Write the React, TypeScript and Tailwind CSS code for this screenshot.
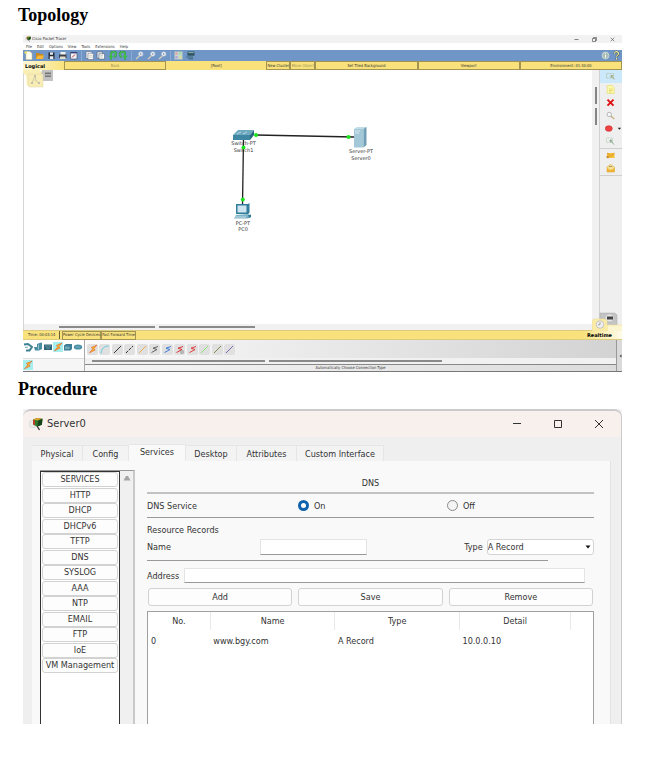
import React, { useState } from "react";

const TINY = "font-['DejaVu_Sans_Condensed','Noto_Sans',sans-serif] text-[4px] leading-[6px]";

/* ---------- Packet Tracer: toolbar glyphs ---------- */

function Glyph({ children, size = 11, box = 11 }: { children: React.ReactNode; size?: number; box?: number }) {
  return (
    <svg width={size} height={size} viewBox={`0 0 ${box} ${box}`} fill="none" aria-hidden="true">
      {children}
    </svg>
  );
}

const NewFile = (
  <Glyph>
    <path d="M3 1.5h4l2 2v6H3z" fill="#fffef0" stroke="#c9c68a" strokeWidth=".5" />
    <path d="M1.5 1.5h2.5v2H1.5z" fill="#f5e65c" />
  </Glyph>
);
const OpenFile = (
  <Glyph>
    <path d="M2 3h3l1 1h3v5H2z" fill="#c88a1e" />
    <path d="M3.5 5.5H10L8.8 9H2z" fill="#f6b637" />
  </Glyph>
);
const SaveFile = (
  <Glyph>
    <path d="M2.5 2.5h6v6.5h-6z" fill="#252a33" />
    <path d="M4 2.5h3v2.3H4zM3.8 6.3h3.5V9H3.8z" fill="#e8edf3" />
  </Glyph>
);
const Printer = (
  <Glyph>
    <path d="M3.5 2h5v3h-5z" fill="#f3f3ec" />
    <path d="M2 4.5h7.5V8H2z" fill="#3c4048" />
    <path d="M3 6.5h5.5V9H3z" fill="#e0dfce" />
  </Glyph>
);
const Wizard = (
  <Glyph>
    <path d="M2.5 2.5h6.5v6.5H2.5z" fill="#f2f2f4" stroke="#40455a" strokeWidth=".6" />
    <path d="M2.5 2.7H9" stroke="#303a78" strokeWidth="1.3" />
    <path d="M4 7.5 7 4.5" stroke="#b63a4a" />
  </Glyph>
);
const Copy = (
  <Glyph>
    <path d="M2 1.5h5l1 1v6H2z" fill="#e9ecef" stroke="#5a6270" strokeWidth=".5" />
    <path d="M4 3.3h4.300l1 1V9.500H4z" fill="#faf9f4" stroke="#5a6270" strokeWidth=".5" />
    <path d="M5.200 5.600h2.600M5.200 7.200h2.600" stroke="#a0a5b0" strokeWidth=".5" />
  </Glyph>
);
const Paste = (
  <Glyph>
    <path d="M2 1.700h5.500v6.500H2z" fill="#d8dde3" stroke="#4d5564" strokeWidth=".5" />
    <path d="M4 3.800h5.500V9H4z" fill="#fdfdf9" stroke="#4d5564" strokeWidth=".5" />
    <path d="M5 5.600h3M5 7h3" stroke="#a0a5b0" strokeWidth=".5" />
  </Glyph>
);
const Undo = (
  <Glyph>
    <path d="M4 9.500V4.300C4 1 9 1 9 4.300c0 1.500-.8 2.400-2.200 2.700" stroke="#1f8f36" strokeWidth="2" />
    <path d="M4 9V4.300C4 1 9 1 9 4.300c0 1.500-.8 2.400-2.200 2.700" stroke="#6fe066" strokeWidth="1" />
    <path d="M1.300 5.800h5L3.900 9.300z" fill="#38bb4a" />
  </Glyph>
);
const Redo = (
  <Glyph>
    <path d="M7 9.500V4.300C7 1 2 1 2 4.300c0 1.500.8 2.400 2.200 2.700" stroke="#1f8f36" strokeWidth="2" />
    <path d="M7 9V4.300C7 1 2 1 2 4.300c0 1.500.8 2.400 2.200 2.700" stroke="#6fe066" strokeWidth="1" />
    <path d="M9.700 5.800h-5l2.400 3.500z" fill="#38bb4a" />
  </Glyph>
);
const Zoom = (
  <Glyph>
    <path d="M5.4 5.8 2 9.2" stroke="#e3d3b4" strokeWidth="1.2" />
    <circle cx="6.8" cy="4" r="2.3" fill="#e8eff6" stroke="#b4bfcc" strokeWidth=".6" />
    <circle cx="6.8" cy="4" r=".7" fill="#6c7789" />
  </Glyph>
);
const Palette = (
  <Glyph>
    <path d="M1.5 1.5h8v8h-8z" fill="#c3d8d3" stroke="#9ab1b5" strokeWidth=".5" />
    <path d="M2.3 2.3h2.4v2.4H2.3z" fill="#e6a3a3" />
    <path d="M6 2.3h2.6v2.4H6z" fill="#a9dba4" />
    <path d="M2.3 6h2.4v2.6H2.3z" fill="#b6a6dc" />
    <path d="M6 6h2.6v2.6H6z" fill="#d5dc9a" />
  </Glyph>
);
const CustomDevice = (
  <Glyph>
    <path d="M2.500 1.500h7v4.200h-7z" fill="#2f5560" />
    <path d="M3.300 2.600h5.500" stroke="#a8c7ca" strokeWidth=".8" />
    <path d="M1.500 6.500H8v1H1.500zM3.500 8.200H8v1H3.500z" fill="#3c6570" />
  </Glyph>
);
const Info = (
  <Glyph>
    <circle cx="5.5" cy="5.5" r="3.400" fill="#a9bdbb" stroke="#d8e4d8" strokeWidth=".7" />
    <path d="M5.500 5v2.600M5.500 3.200v.9" stroke="#fdfdee" />
  </Glyph>
);
const Help = (
  <Glyph>
    <path d="M3.500 3.800c0-3 4.200-2.600 4 0C7.400 5.100 5.600 5.200 5.600 6.700M5.600 8v1.400" stroke="#36443a" strokeWidth="2" />
    <path d="M3.500 3.800c0-3 4.200-2.600 4 0C7.400 5.100 5.600 5.200 5.600 6.700M5.600 8v1.400" stroke="#f2f1a8" strokeWidth="1.200" />
  </Glyph>
);

const groups = [
  { width: "w-[56px]", items: [["New", NewFile], ["Open", OpenFile], ["Save", SaveFile], ["Print", Printer], ["Activity wizard", Wizard]] },
  { width: "w-[45px]", items: [["Copy", Copy], ["Paste", Paste], ["Undo", Undo], ["Redo", Redo]] },
  { width: "w-[34px]", items: [["Zoom in", Zoom], ["Zoom reset", Zoom], ["Zoom out", Zoom]] },
  { width: "w-[23px]", items: [["Palette", Palette], ["Custom devices", CustomDevice]] },
] as { width: string; items: [string, React.ReactNode][] }[];

function AppIcon({ size }: { size: number }) {
  return (
    <svg width={size} height={size} viewBox="0 0 14 14" aria-hidden="true">
      <circle cx="4" cy="7" r="3.800" fill="#e9ece9" stroke="#c4c9c4" strokeWidth=".5" />
      <path d="M4 2.500 8 1l5.500.8-.6 6L8.500 9.500 4.500 8z" fill="#2f7a2d" />
      <path d="M4 2.500 8 1l5.500.8-4.500 1.700z" fill="#e0a32c" />
      <path d="M9 3.500l4.500-1.700-.6 6L8.500 9.500z" fill="#17431b" />
      <path d="M4 3v4.500l2 .6V3.300z" fill="#c23b2b" />
      <path d="m8 9 2.500 4" stroke="#333" strokeWidth="1.400" />
    </svg>
  );
}

/* ---------- Packet Tracer: side tools ---------- */

const sideTools: { label: string; icon: React.ReactNode }[] = [
  {
    label: "Select",
    icon: (
      <Glyph>
        <path d="M1.500 2.500h7v4.500h-7z" stroke="#b3bd9b" strokeWidth=".7" strokeDasharray="1.200 .5" />
        <path d="m6 4.500 3.500 4M6 4.500l.3 2.500M6 4.500l2.500.4" stroke="#9ba56f" strokeWidth=".9" />
      </Glyph>
    ),
  },
  {
    label: "Place note",
    icon: (
      <Glyph>
        <path d="M2.200 1.500h5l2 2v6h-7z" fill="#fcf8ae" stroke="#e2da63" strokeWidth=".6" />
        <path d="M4 5h3.500M4 6.500h3.500M4 8h2.500" stroke="#d8c94a" strokeWidth=".6" />
      </Glyph>
    ),
  },
  {
    label: "Delete",
    icon: (
      <Glyph>
        <path d="m2.500 2.700 6 6M8.500 2.700l-6 6" stroke="#e01010" strokeWidth="1.900" />
      </Glyph>
    ),
  },
  {
    label: "Inspect",
    icon: (
      <Glyph>
        <path d="m5.800 6 3.500 3" stroke="#c3ac7a" strokeWidth="1.200" />
        <circle cx="4.300" cy="4.500" r="2.200" fill="#f6f8fb" stroke="#a5a5a5" strokeWidth=".8" />
      </Glyph>
    ),
  },
  {
    label: "Draw ellipse",
    icon: (
      <svg width="18" height="11" viewBox="0 0 18 11" aria-hidden="true">
        <ellipse cx="4" cy="5.500" rx="3.700" ry="3" fill="#f04343" stroke="#c92525" strokeWidth=".6" />
        <path d="M13.500 4.700h3.500l-1.700 2z" fill="#222" />
      </svg>
    ),
  },
  {
    label: "Resize shape",
    icon: (
      <Glyph>
        <path d="M1.500 2h6v4.500h-6z" stroke="#a9c0aa" strokeWidth=".6" strokeDasharray="1 .5" />
        <path d="m5 4 4 4.500M5 4l.4 2.300M5 4l2.400.4" stroke="#7da283" strokeWidth=".9" />
      </Glyph>
    ),
  },
];

const pduTools = [
  {
    label: "Add simple PDU",
    icon: (
      <Glyph>
        <path d="M2 3h7.500v5H2z" fill="#f4bd3a" />
        <path d="m2 3 3.700 3 3.800-3" stroke="#d08e18" strokeWidth=".7" />
        <circle cx="2.700" cy="7" r="1.300" fill="#c98d32" />
      </Glyph>
    ),
  },
  {
    label: "Add complex PDU",
    icon: (
      <Glyph>
        <path d="M2 4 5.500 1.500 9.500 4v5H2z" fill="#f7df93" stroke="#d29a2a" strokeWidth=".5" />
        <path d="M2 5l3.700 2.200L9.500 5v4H2z" fill="#eeb232" />
        <path d="M4 3.500h3" stroke="#8c7a4a" strokeWidth=".7" />
      </Glyph>
    ),
  },
];

/* ---------- Packet Tracer: topology ---------- */

const nodes = [
  { x: 220.5, y: 75, model: "Switch-PT", name: "Switch1" },
  { x: 338, y: 83, model: "Server-PT", name: "Server0" },
  { x: 220, y: 154.5, model: "PC-PT", name: "PC0" },
];

function Topology() {
  return (
    <svg width="570" height="254" viewBox="0 0 570 254" aria-label="Network topology" className="block max-w-none">
      <path d="M0 0h17v1l3 1v14H5L3.500 14.500V6L0 3z" fill="#f9efb4" />
      <path d="M19 0h11v11H17z" fill="#c2c2c2" />
      <path d="M22 2.500h6v1.700h-6zM22 5.500h6v1.500h-6z" fill="#777" />
      <path d="M5 4h15v13H6z" fill="#f8edb5" stroke="#e0d6a2" strokeWidth=".5" />
      <path d="m9 13 3-7 1 5 3 2" stroke="#b5b19a" strokeWidth=".6" fill="none" />
      <path d="M8 12h2v2H8zM11 5h2v2h-2zM15 12h2v2h-2z" fill="#c3bfa8" />

      {nodes.map((n) => (
        <text key={n.name} textAnchor="middle" fill="#333" className="font-['DejaVu_Sans',sans-serif] text-[5px]">
          <tspan x={n.x} y={n.y}>{n.model}</tspan>
          <tspan x={n.x} y={n.y + 6.5}>{n.name}</tspan>
        </text>
      ))}

      <path d="M233 65 331 67" stroke="#222" strokeWidth="1.300" />
      <path d="M220.500 69 219.500 135" stroke="#222" strokeWidth="1.300" />

      <path d="m210 65 5-5h16l-4 5z" fill="#6fa9bf" />
      <path d="M210 65h17v5h-17z" fill="#3f86a3" />
      <path d="m227 65 4-5v5l-4 5z" fill="#2a6580" />
      <path d="m214 64 4-2m2 2 4-2" stroke="#d2e8ef" strokeWidth=".7" />

      <path d="m331 59 3-2h10l-3 2z" fill="#c1dce7" />
      <path d="M331 59h9.500v18.500H331z" fill="#a3c8d8" />
      <path d="m340.500 59 3-2v18l-3 2.500z" fill="#719fb5" />
      <path d="M332 61h5M332 63h4" stroke="#e6f3f8" strokeWidth=".8" />

      <path d="M213 134h12l1.500-1v10L225 144h-12z" fill="#327d9b" />
      <path d="M214.500 135.500h9v7h-9z" fill="#cfe5ef" />
      <path d="m213 145 12-1 3 3-3 1.500h-14z" fill="#7cb2c6" />
      <path d="M212 147h11" stroke="#e4f1f6" strokeWidth=".7" />
      <path d="m225 145 3-.5v2.500l-2 1z" fill="#2f7a96" />

      {[[233, 65], [325.5, 67], [220.5, 77.5], [219.8, 129.5]].map(([cx, cy]) => (
        <circle key={`${cx}-${cy}`} cx={cx} cy={cy} r="2" fill="#1be51b" />
      ))}
    </svg>
  );
}

/* ---------- Packet Tracer: bottom palette ---------- */

function Bolt() {
  return (
    <svg width="10" height="10" viewBox="0 0 10 10" aria-hidden="true">
      <path d="M9 1 3.300 3.500l1.500 1.300L1.500 8.800l5.700-2.800L5.800 4.800z" fill="#f9b52a" stroke="#e0602a" strokeWidth=".6" />
    </svg>
  );
}

const deviceKinds: { label: string; icon: React.ReactNode }[] = [
  {
    label: "Routers",
    icon: (
      <Glyph size={10} box={10}>
        <path d="M1 2.500 5 2l4 3-2.500 3.500L3 8.500" stroke="#3f8294" strokeWidth="2" />
        <path d="m2 5.500 3-.5" stroke="#6fa8b6" strokeWidth="1" />
      </Glyph>
    ),
  },
  {
    label: "Switches",
    icon: (
      <Glyph size={10} box={10}>
        <path d="M1 5h3V2l4-1.500 1 .5v6L6 8.500H2z" fill="#4a8ea2" />
        <path d="M5.500 2.500v5" stroke="#cfe7ec" strokeWidth=".6" />
      </Glyph>
    ),
  },
  {
    label: "Hubs",
    icon: (
      <Glyph size={10} box={10}>
        <path d="M1 2.500h8v5.500H1z" fill="#2f6678" />
        <path d="M2 4h6M3 6h4" stroke="#8fb6c1" strokeWidth=".6" />
      </Glyph>
    ),
  },
  { label: "Connections", icon: <Bolt /> },
  {
    label: "End devices",
    icon: (
      <Glyph size={10} box={10}>
        <path d="m1 3.500 2-1.500h6v5L7.500 8.500H1z" fill="#3d7f95" />
        <path d="M2 4.500h4.500V7H2z" fill="#75aabb" />
      </Glyph>
    ),
  },
  {
    label: "Clouds",
    icon: (
      <Glyph size={10} box={10}>
        <ellipse cx="5" cy="5" rx="4.200" ry="2.600" fill="#4b8fa5" />
        <path d="M2.500 5h5" stroke="#8cc0cf" strokeWidth=".7" />
      </Glyph>
    ),
  },
];

const Zig = ({ color, dot }: { color: string; dot?: boolean }) => (
  <Glyph>
    <path d="M9 2.500 4 4.200l4 1.300-5.500 3" stroke={color} strokeWidth=".9" />
    {dot && <circle cx="8" cy="8" r="1.700" fill="#bbb" stroke="#888" strokeWidth=".4" />}
  </Glyph>
);
const Wire = ({ color, dash }: { color: string; dash?: string }) => (
  <Glyph>
    <path d="M2 9 9 2" stroke={color} strokeWidth=".9" strokeDasharray={dash} />
  </Glyph>
);

const cables: { label: string; icon: React.ReactNode }[] = [
  { label: "Automatic", icon: <Bolt /> },
  { label: "Console", icon: <Glyph><path d="M2 9.500C2.500 5 5 2 9.500 2" stroke="#5fcbdc" strokeWidth="1" /></Glyph> },
  { label: "Copper straight-through", icon: <Wire color="#222" /> },
  { label: "Copper cross-over", icon: <Wire color="#222" dash="3 1" /> },
  { label: "Fiber", icon: <Wire color="#f0a63c" /> },
  { label: "Phone", icon: <Zig color="#555" /> },
  { label: "Coaxial", icon: <Zig color="#2f6fd8" /> },
  { label: "Serial DCE", icon: <Zig color="#d22" dot /> },
  { label: "Serial DTE", icon: <Zig color="#e02a2a" /> },
  { label: "Octal", icon: <Wire color="#84e06a" /> },
  { label: "IoE custom", icon: <Wire color="#77803f" /> },
  { label: "USB", icon: <Wire color="#7459a8" /> },
];

const barButton = "flex h-[9px] min-w-0 items-center justify-center whitespace-nowrap border border-[#a39551]";

function PacketTracer() {
  return (
    <section aria-label="Cisco Packet Tracer" className={`relative ${TINY} text-[#333]`}>
      <header className="flex h-[8px] items-center bg-[#f3f2f2] pl-[2px]">
        <AppIcon size={6} />
        <span className="ml-px">Cisco Packet Tracer</span>
        <div className="ml-auto flex items-center gap-[13px] pr-[7px]">
          <button aria-label="Minimize"><Glyph size={5} box={5}><path d="M.5 2.500h4" stroke="#555" strokeWidth=".7" /></Glyph></button>
          <button aria-label="Restore"><Glyph size={5} box={5}><path d="M.5 1.500h3v3h-3zM1.500 1.500v-1h3v3h-1" stroke="#444" strokeWidth=".6" /></Glyph></button>
          <button aria-label="Close"><Glyph size={5} box={5}><path d="m.7.7 3.600 3.600M4.300.7.7 4.300" stroke="#444" strokeWidth=".6" /></Glyph></button>
        </div>
      </header>

      <nav className="flex h-[7px] items-center gap-[5px] bg-white pl-[3px]">
        {["File", "Edit", "Options", "View", "Tools", "Extensions", "Help"].map((m) => (
          <button key={m}>{m}</button>
        ))}
      </nav>

      <div className="flex h-[11px] items-center bg-[#7096c8]">
        {groups.map((g, i) => (
          <React.Fragment key={g.width}>
            {i > 0 && <span className="mx-[2px] h-[10px] w-px bg-[#8eabd2]" />}
            <div className={`flex justify-between ${g.width}`}>
              {g.items.map(([label, icon]) => (
                <button key={label} aria-label={label}>{icon}</button>
              ))}
            </div>
          </React.Fragment>
        ))}
        <div className="ml-auto flex">
          <button aria-label="Info">{Info}</button>
          <button aria-label="Help">{Help}</button>
        </div>
      </div>

      <div className="flex h-[9px] bg-[#f9e27c]">
        <strong className="flex w-[41px] items-center bg-gradient-to-r from-[#fdf7d6] to-[#f9e27c] pl-[2px] font-['DejaVu_Sans',sans-serif] text-[5px] text-black">Logical</strong>
        <button className={`${barButton} flex-1 text-[#9b8f57]`}>Back</button>
        <span className="flex flex-1 items-center justify-center">[Root]</span>
        <button className={`${barButton} w-[24px]`}>New Cluster</button>
        <button className={`${barButton} w-[25px] text-[#a3965a]`}>Move Object</button>
        <button className={`${barButton} flex-1`}>Set Tiled Background</button>
        <button className={`${barButton} flex-1`}>Viewport</button>
        <button className={`${barButton} flex-1`}>Environment: 01:30:00</button>
      </div>

      <div className="flex h-[260px]">
        <div className="flex min-w-0 flex-1 flex-col border-l border-[#d5d5d5] bg-white">
          <div className="flex min-h-0 flex-1">
            <div className="-ml-px min-w-0 flex-1 overflow-hidden">
              <Topology />
            </div>
            <div className="flex w-[7px] flex-col items-center gap-[4px] bg-[#f1f1f1] pt-[17px]">
              <span className="h-[17px] w-[2px] bg-[#858585]" />
              <span className="h-[17px] w-[2px] bg-[#858585]" />
            </div>
          </div>
          <div className="flex h-[6px] items-center gap-[4px] bg-[#f1f1f1] pl-[35px]">
            <span className="h-[2px] w-[96px] bg-[#8a8a8a]" />
            <span className="h-[2px] w-[96px] bg-[#8a8a8a]" />
          </div>
        </div>
        <div className="w-[23px] border-l border-[#d0d0d0] bg-[#efefef]">
          {sideTools.map((t, i) => (
            <button
              key={t.label}
              aria-label={t.label}
              className={`flex h-[13px] w-full items-center pl-[5px] ${i === 0 ? "bg-[#cce8fb]" : ""}`}
            >
              {t.icon}
            </button>
          ))}
          <div className="border-y border-[#cfcfcf]">
            {pduTools.map((t) => (
              <button key={t.label} aria-label={t.label} className="flex h-[13px] w-full items-center pl-[5px]">
                {t.icon}
              </button>
            ))}
          </div>
        </div>
      </div>

      <div className="flex h-[10px] items-center border-y border-[#dccb7c] bg-[#f9e27c]">
        <span className="ml-[5px] w-[28px] whitespace-nowrap">Time: 00:03:14</span>
        <span className="ml-[3px] h-[8px] w-px bg-[#6d6335]" />
        <button className={`${barButton} ml-[2px] h-[8px] w-[39px]`}>Power Cycle Devices</button>
        <button className={`${barButton} h-[8px] w-[35px]`}>Fast Forward Time</button>
        <strong className="ml-auto flex h-[8px] items-center bg-gradient-to-r from-[#f9e27c] to-[#fefbe9] pr-[10px] pl-[4px] font-['DejaVu_Sans',sans-serif] text-[5px] text-black">Realtime</strong>
      </div>
      <svg width="30" height="19" viewBox="0 0 30 19" aria-hidden="true" className="absolute right-0 bottom-[41px]">
        <path d="M8 1h15l2 2v12H8z" fill="#c4c4c4" stroke="#aaa" strokeWidth=".5" />
        <ellipse cx="17.500" cy="6" rx="4.500" ry="4" fill="#e5e5e5" stroke="#aaa" strokeWidth=".5" />
        <path d="M15 4.500h6v3h-6z" fill="#444" />
        <path d="M0 19V8.500L2 7h11l2 1.500V13h15v6z" fill="#faeba6" stroke="#e6d890" strokeWidth=".5" />
        <path d="M16 13.500h14V19H16z" fill="#fcf5d0" />
        <circle cx="8" cy="12.500" r="3.800" fill="#efefef" stroke="#b5b5b5" strokeWidth=".7" />
        <path d="M8 10v2.700H6" stroke="#777" strokeWidth=".6" fill="none" />
      </svg>

      <div className="flex h-[32px] border-b border-[#777] bg-[#eee]">
        <div className="flex w-[62px] flex-col border-r border-[#aaa] bg-white">
          <div className="flex h-[13px] items-center">
            {deviceKinds.map((d) => (
              <button key={d.label} aria-label={d.label} className={d.label === "Connections" ? "bg-[#a5f0ee]" : ""}>
                {d.icon}
              </button>
            ))}
          </div>
          <div className="mt-[5px] flex flex-1 items-center border-t border-[#ddd] bg-[#f6f6f6]">
            <button aria-label="Connections" className="bg-[#a5f0ee]"><Bolt /></button>
          </div>
        </div>
        <div className="flex min-w-0 flex-1 flex-col border-r border-[#999]">
          <div className="flex h-[19px] items-center bg-gradient-to-r from-[#fbfbfb] to-[#d3d3d3] pl-[2px]">
            <div className="flex w-[148px] justify-between">
              {cables.map((c) => (
                <button key={c.label} aria-label={c.label} className="flex size-[11px] items-center justify-center rounded-xs bg-[#e0e0e0]">
                  {c.icon}
                </button>
              ))}
            </div>
          </div>
          <div className="flex h-[6px] items-center gap-[4px] bg-[#f1f1f1] pl-[7px]">
            <span className="h-[2px] w-[173px] bg-[#8a8a8a]" />
            <span className="h-[2px] w-[173px] bg-[#8a8a8a]" />
          </div>
          <div className="flex flex-1 items-center justify-center border-t border-[#888] bg-gradient-to-r from-[#f6f6f6] to-[#dcdcdc]">
            Automatically Choose Connection Type
          </div>
        </div>
        <div className="flex w-[5px] items-center justify-end bg-[#dadada]">
          <svg width="3" height="4" viewBox="0 0 3 4" aria-hidden="true"><path d="M2.500.5v3L.5 2z" fill="#444" /></svg>
        </div>
      </div>
    </section>
  );
}

/* ---------- Server0 window ---------- */

const tabs: [string, string][] = [
  ["Physical", "w-[51px]"],
  ["Config", "w-[46px]"],
  ["Services", "w-[57px]"],
  ["Desktop", "w-[51px]"],
  ["Attributes", "w-[60px]"],
  ["Custom Interface", "w-[87px]"],
];

const services = ["SERVICES", "HTTP", "DHCP", "DHCPv6", "TFTP", "DNS", "SYSLOG", "AAA", "NTP", "EMAIL", "FTP", "IoE", "VM Management"];

const field = "border border-[#e4e4e4] border-b-[#999] bg-white px-1 outline-none";

function Radio({ label, checked, onChange }: { label: string; checked: boolean; onChange: () => void }) {
  return (
    <label className="flex items-center gap-[5px] pl-[2px]">
      <input
        type="radio"
        name="dns-service"
        checked={checked}
        onChange={onChange}
        className="size-[11px] appearance-none rounded-full border border-[#8a8a8a] bg-[#f4f4f4] checked:border-[3px] checked:border-[#1062ad] checked:bg-white"
      />
      {label}
    </label>
  );
}

function ServerWindow() {
  const [on, setOn] = useState(true);
  return (
    <section
      aria-label="Server0"
      className="bg-[#f4f4f4] font-['DejaVu_Sans_Condensed','Noto_Sans',sans-serif] text-[9px] leading-[12px] text-[#333]"
    >
      <div className="flex h-[315px] flex-col overflow-hidden rounded-t-[8px] border-t-2 border-r border-[#cccaca] bg-[#efefef]">
        <header className="flex h-[26px] shrink-0 items-center bg-[#f8f0ed] pr-[17px] pl-[6px]">
          <AppIcon size={14} />
          <h3 className="ml-[4px] text-[11px]">Server0</h3>
          <div className="ml-auto flex items-center gap-[31px]">
            <button aria-label="Minimize"><Glyph size={10} box={10}><path d="M1 4.500h8" stroke="#333" /></Glyph></button>
            <button aria-label="Maximize"><Glyph size={10} box={10}><path d="M1.500 1.500h7v7h-7z" stroke="#333" /></Glyph></button>
            <button aria-label="Close"><Glyph size={10} box={10}><path d="m1 1 8 8M9 1 1 9" stroke="#333" /></Glyph></button>
          </div>
        </header>

        <div role="tablist" className="ml-[9px] flex shrink-0 items-end pt-[7px]">
          {tabs.map(([name, width]) => (
            <button
              key={name}
              role="tab"
              aria-selected={name === "Services"}
              className={`${width} whitespace-nowrap border-t border-r border-[#e6e6e6] ${
                name === "Services" ? "h-[17px] bg-[#f9f9f9] pb-[2px]" : "h-[16px] bg-[#f3f3f4]"
              }`}
            >
              {name}
            </button>
          ))}
        </div>

        <div className="mr-[10px] ml-[9px] flex min-h-0 flex-1 border-r border-[#e3e3e3] bg-[#f9f9f9] pr-[16px] pl-[8px]">
          <div className="mt-[9px] flex w-[95px] shrink-0 border-t border-r-2 border-t-[#999] border-r-[#c9c9c9] bg-[#f0f0f0]">
            <div className="w-[80px] border border-b-0 border-[#333] bg-white px-px">
              <div className="flex h-[201px] flex-col justify-between">
                {services.map((s) => (
                  <button key={s} className="h-[15px] whitespace-nowrap rounded-[3px] border border-[#d2d2d2] bg-[#fdfdfd] leading-[13px]">
                    {s}
                  </button>
                ))}
              </div>
            </div>
            <svg width="13" height="14" viewBox="0 0 13 14" aria-hidden="true"><path d="M3.500 9.500h7L8 5H6z" fill="#a5a5a5" /></svg>
          </div>

          <div className="ml-[12px] flex min-w-0 flex-1 flex-col">
            <h4 className="border-b-2 border-[#c2c2c2] pt-[16px] pb-[3px] text-center">DNS</h4>
            <div className="grid h-[24px] shrink-0 grid-cols-3 items-center border-b border-[#999]">
              <span>DNS Service</span>
              <Radio label="On" checked={on} onChange={() => setOn(true)} />
              <Radio label="Off" checked={!on} onChange={() => setOn(false)} />
            </div>
            <p className="mt-[6px]">Resource Records</p>
            <div className="mt-[3px] flex h-[16px] shrink-0 items-center">
              <label htmlFor="record-name" className="w-[113px]">Name</label>
              <input id="record-name" className={`${field} h-[16px] w-[24%]`} />
              <label htmlFor="record-type" className="mr-[4px] ml-auto">Type</label>
              <div className="relative w-[24%]">
                <select
                  id="record-type"
                  className="block h-[16px] w-full appearance-none rounded-[3px] border border-[#d4d4d4] bg-white leading-[13px]"
                >
                  <option>A Record</option>
                </select>
                <svg width="6" height="4" viewBox="0 0 6 4" aria-hidden="true" className="pointer-events-none absolute top-[6px] right-[3px]">
                  <path d="M.5.5h5L3 3.500z" fill="#111" />
                </svg>
              </div>
            </div>
            <hr className="mt-[5px] mr-[46px] border-[#999]" />
            <div className="mt-[7px] mr-[9px] flex h-[15px] shrink-0 items-center">
              <label htmlFor="record-address" className="w-[37px]">Address</label>
              <input id="record-address" className={`${field} h-[15px] min-w-0 flex-1`} />
            </div>
            <div className="mx-px mt-[5px] grid shrink-0 grid-cols-3 gap-[6px]">
              {["Add", "Save", "Remove"].map((b) => (
                <button key={b} className="h-[18px] rounded-[3px] border border-[#d2d2d2] bg-[#fdfdfd] leading-[15px]">{b}</button>
              ))}
            </div>
            <div className="mt-[5px] min-h-0 flex-1 border border-b-0 border-[#a0a0a0] bg-white">
              <table className="w-full table-fixed">
                <colgroup>
                  <col className="w-[14%]" />
                  <col className="w-[28%]" />
                  <col className="w-[28%]" />
                  <col className="w-[25%]" />
                  <col />
                </colgroup>
                <thead>
                  <tr className="h-[18px]">
                    {["No.", "Name", "Type", "Detail"].map((h) => (
                      <th key={h} className="border-r border-[#e8e8e8] p-0 text-center font-normal">{h}</th>
                    ))}
                    <th className="p-0" />
                  </tr>
                </thead>
                <tbody>
                  <tr className="h-[21px]">
                    {["0", "www.bgy.com", "A Record", "10.0.0.10"].map((c) => (
                      <td key={c} className="p-0 pl-[3px]">{c}</td>
                    ))}
                    <td className="p-0" />
                  </tr>
                </tbody>
              </table>
            </div>
          </div>
        </div>
      </div>
    </section>
  );
}

const heading = "-ml-[5px] font-['Liberation_Serif',serif] text-[18px] leading-[20px] font-bold text-black";

export default function App() {
  return (
    <main className="bg-white pt-[5px] pr-[33px] pb-9 pl-[23px]">
      <h2 className={heading}>Topology</h2>
      <div className="mt-[10px]">
        <PacketTracer />
      </div>
      <h2 className={`${heading} mt-[7px]`}>Procedure</h2>
      <div className="mt-[10px]">
        <ServerWindow />
      </div>
    </main>
  );
}
